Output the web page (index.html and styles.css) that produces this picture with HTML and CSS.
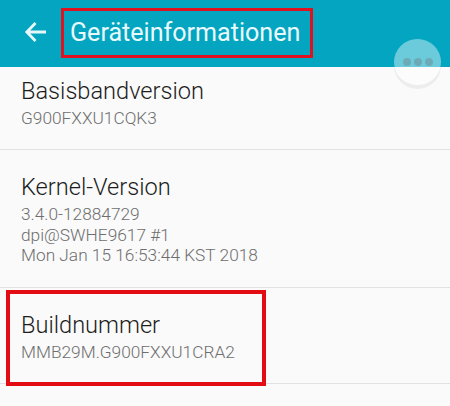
FILE: index.html
```html
<!DOCTYPE html>
<html lang="de">
<head>
<meta charset="utf-8">
<title>Geräteinformationen</title>
<link rel="stylesheet" href="styles.css">
</head>
<body>
<div class="screen">
  <header class="appbar">
    <svg class="back" width="24" height="22" viewBox="0 0 24 22"><path d="M22 11H3M11.500 2 2.800 11l8.700 9" fill="none" stroke="#e6f7fa" stroke-width="2.800"/></svg>
    <div class="title-box"><h1 class="title">Geräteinformationen</h1></div>
  </header>
  <main class="list">
    <section class="row row-first">
      <div class="name">Basisbandversion</div>
      <div class="value">G900FXXU1CQK3</div>
    </section>
    <section class="row row-kernel">
      <div class="name">Kernel-Version</div>
      <div class="value">3.4.0-12884729<br>dpi@SWHE9617 #1<br>Mon Jan 15 16:53:44 KST 2018</div>
    </section>
    <section class="row row-build">
      <div class="name">Buildnummer</div>
      <div class="value">MMB29M.G900FXXU1CRA2</div>
    </section>
  </main>
  <div class="highlight"></div>
  <div class="float-btn"><i></i><i></i><i></i></div>
</div>
</body>
</html>
```
FILE: styles.css
```css
html, body { margin: 0; padding: 0; }
body { background: #fafafa; font-family: Roboto, "Liberation Sans", sans-serif; }
.screen { position: relative; width: 450px; height: 406px; overflow: hidden; background: #fafafa; }
.appbar { height: 67px; background: #03a5c1; display: flex; align-items: flex-start; padding-left: 24px; box-sizing: border-box; }
.back { margin-top: 21px; margin-right: 13px; flex: none; }
.title-box { margin-top: 8px; width: 252px; height: 50px; box-sizing: border-box; border: 3.500px solid #e0121f; display: flex; align-items: center; padding-left: 6px; }
.title { margin: 0; font-size: 25.100px; font-weight: 400; color: #eafafc; white-space: nowrap; line-height: 32px; }
.list { display: flex; flex-direction: column; }
.row { padding-left: 21px; border-bottom: 1px solid #e2e2e2; box-sizing: border-box; }
.row-first { height: 83px; padding-top: 8px; }
.row-kernel { height: 138px; padding-top: 21px; }
.row-build { height: 96px; padding-top: 21px; }
.name { font-size: 23.600px; line-height: 32px; font-weight: 300; color: #1d1d1d; white-space: nowrap; }
.value { font-size: 17.300px; line-height: 20.500px; font-weight: 300; color: #6e6e6e; margin-top: 1px; white-space: nowrap; }
.highlight { position: absolute; left: 6px; top: 290px; width: 260px; height: 96px; box-sizing: border-box; border: 4px solid #e30c13; }
.float-btn { position: absolute; left: 394px; top: 39px; width: 47px; height: 46px; border-radius: 50%; background: rgba(255, 255, 255, 0.42); box-shadow: 0 4px 0 rgba(0, 0, 0, 0.05); display: flex; align-items: center; justify-content: center; gap: 3px; }
.float-btn i { width: 8px; height: 8px; border-radius: 50%; background: rgba(110, 130, 140, 0.45); }
```
